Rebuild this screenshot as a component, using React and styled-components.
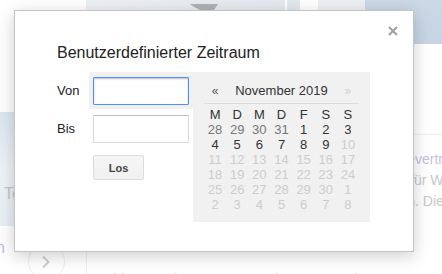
import React from "react";
import styled, { createGlobalStyle } from "styled-components";

const Global = createGlobalStyle`
  html, body { margin: 0; padding: 0; background: #fff; }
  body { font-family: "Liberation Sans", Arial, sans-serif; }
  #root { width: 442px; height: 274px; }
`;

const Page = styled.div`
  position: relative;
  width: 442px;
  height: 274px;
  overflow: hidden;
  background: #fff;
  display: flex;
  flex-direction: column;
`;

/* ---------- faded background page ---------- */
const TopStrip = styled.div`
  display: flex;
  flex: none;
  height: 44px;
`;

const Thumb = styled.div`
  flex: none;
  width: ${(p) => p.$w}px;
  height: ${(p) => p.$h || 10}px;
  margin-left: ${(p) => p.$ml || 0}px;
  background: ${(p) => p.$bg};
  overflow: hidden;
`;

const Main = styled.div`
  flex: 1;
  display: grid;
  grid-template-columns: 86px 1fr;
  min-height: 0;
`;

const LeftRail = styled.div`
  display: flex;
  flex-direction: column;
`;

const RailImage = styled.div`
  margin-top: 68px;
  width: 76px;
  height: 114px;
  box-sizing: border-box;
  background: linear-gradient(165deg, #dce6ef 0%, #eef3f7 45%, #e6eef4 100%);
  display: flex;
  align-items: flex-end;
  padding: 0 0 22px 4px;
  font-size: 16px;
  line-height: 20px;
  color: #c3c8cd;
`;

const NavRow = styled.div`
  display: flex;
  align-items: flex-start;
  margin-top: 12px;
`;

const RailLink = styled.span`
  font-size: 16px;
  line-height: 20px;
  color: #c3b8ea;
  margin-left: -4px;
`;

const NavCircle = styled.div`
  margin: 5px 0 0 23px;
  width: 37px;
  height: 37px;
  box-sizing: border-box;
  border-radius: 50%;
  border: 1px solid #efefef;
  background: #fff;
  display: flex;
  align-items: center;
  justify-content: center;
`;

const Content = styled.div`
  border-left: 1px solid #eeeeee;
  padding-left: 16px;
  display: flex;
  flex-direction: column;
  min-width: 0;
`;

const TopBlock = styled.div`
  height: 90px;
  border-bottom: 1px solid #eeeeee;
  margin-left: -16px;
`;

const Snippet = styled.div`
  margin-top: 14px;
  display: grid;
  grid-template-columns: 312px auto;
  font-size: 14px;
  line-height: 21px;
  white-space: nowrap;
`;

const SnippetLead = styled.span`
  overflow: hidden;
  text-align: right;
  color: #c6c9ce;
`;

const SnippetTail = styled.span`
  color: ${(p) => (p.$link ? "#cbc1e3" : "#c6c9ce")};
  margin-left: ${(p) => p.$shift || 0}px;
`;

const Caption = styled.div`
  margin-top: 57px;
  font-size: 15px;
  line-height: 20px;
  color: #d2d2d2;
  white-space: nowrap;
`;

/* ---------- dialog ---------- */
const Dialog = styled.div`
  position: absolute;
  left: 14px;
  top: 10px;
  width: 400px;
  height: 242px;
  box-sizing: border-box;
  background: #fff;
  border: 1px solid #c4c4c4;
  box-shadow: 0 4px 16px rgba(0, 0, 0, 0.2);
  padding: 32px 0 0 42px;
  color: #222;
  font-family: "Liberation Sans", Arial, sans-serif;
`;

const CloseButton = styled.button`
  position: absolute;
  top: 15px;
  right: 15px;
  width: 10px;
  height: 10px;
  padding: 0;
  border: 0;
  background: none;
  display: block;
  cursor: pointer;
  svg { display: block; }
`;

const Title = styled.h2`
  margin: 0;
  font-size: 16px;
  line-height: 20px;
  font-weight: normal;
  color: #222;
`;

const FormArea = styled.div`
  display: flex;
  align-items: flex-start;
  margin-top: 9px;
`;

const FieldColumn = styled.div`
  width: 136px;
  display: flex;
  flex-direction: column;
  gap: 1px;
`;

const FieldRow = styled.div`
  display: flex;
  align-items: center;
`;

const FieldLabel = styled.label`
  width: 32px;
  font-size: 13px;
  color: #222;
`;

const FieldCell = styled.div`
  padding: 5px 4px 4px;
  background: ${(p) => (p.$active ? "#f1f1f1" : "transparent")};
`;

const Field = styled.input`
  display: block;
  width: 96px;
  height: 28px;
  box-sizing: border-box;
  margin: 0;
  padding: 0 6px;
  font: 13px "Liberation Sans", Arial, sans-serif;
  border: 1px solid ${(p) => (p.$active ? "#4d90fe" : "#d9d9d9")};
  border-top-color: ${(p) => (p.$active ? "#4d90fe" : "#c0c0c0")};
  box-shadow: ${(p) => (p.$active ? "inset 0 1px 2px rgba(0,0,0,0.25)" : "none")};
  border-radius: 1px;
  outline: none;
  background: #fff;
`;

const GoButton = styled.button`
  margin: 7px 0 0 36px;
  width: 51px;
  height: 25px;
  box-sizing: border-box;
  padding: 0;
  font: bold 11px "Liberation Sans", Arial, sans-serif;
  color: #444;
  background: linear-gradient(#f5f5f5, #f1f1f1);
  border: 1px solid #dcdcdc;
  border-radius: 2px;
`;

const Calendar = styled.div`
  width: 177px;
  height: 150px;
  box-sizing: border-box;
  background: #f1f1f1;
  padding: 6px 11px 10px;
`;

const CalHeader = styled.div`
  display: grid;
  grid-template-columns: repeat(7, 1fr);
  align-items: center;
  height: 25px;
  border-bottom: 1px solid #dddddd;
`;

const NavArrow = styled.span`
  text-align: center;
  font-size: 12px;
  color: ${(p) => (p.$disabled ? "#cfcfcf" : "#555")};
`;

const MonthTitle = styled.span`
  grid-column: 2 / span 5;
  text-align: center;
  font-size: 13px;
  color: #333;
`;

const DayGrid = styled.div`
  display: grid;
  grid-template-columns: repeat(7, 1fr);
  margin-top: 3px;
  font-size: 13px;
  line-height: 15px;
  text-align: center;
`;

const dayColors = {
  head: "#333",
  prev: "#777",
  cur: "#333",
  off: "#cdcdcd",
};

const DayCell = styled.span`
  color: ${(p) => dayColors[p.$kind]};
`;

const weekdays = ["M", "D", "M", "D", "F", "S", "S"];

const days = [
  ...[28, 29, 30, 31].map((d) => ({ d, k: "prev" })),
  ...Array.from({ length: 9 }, (_, i) => ({ d: i + 1, k: "cur" })),
  ...Array.from({ length: 21 }, (_, i) => ({ d: i + 10, k: "off" })),
  ...Array.from({ length: 8 }, (_, i) => ({ d: i + 1, k: "off" })),
];

export default function App() {
  return (
    <>
      <Global />
      <Page>
        <TopStrip>
          <Thumb $w={86} $bg="#fff" />
          <Thumb $w={199} $bg="linear-gradient(90deg,#edf1f5,#e4e9ef)">
            <svg width="199" height="10" viewBox="0 0 199 10">
              <path d="M104 0 L132 0 L126 9 C118 8 112 6 104 0 Z" fill="#aeb2b7" />
            </svg>
          </Thumb>
          <Thumb $w={13} $ml={2} $bg="#e3e8ee" />
          <Thumb $w={47} $ml={18} $bg="#eef1f4" />
          <Thumb $w={77} $h={44} $bg="linear-gradient(180deg,#cbd8e6,#c7d5e4)" />
        </TopStrip>
        <Main>
          <LeftRail>
            <RailImage>Top</RailImage>
            <NavRow>
              <RailLink>n</RailLink>
              <NavCircle>
                <svg width="10" height="14" viewBox="0 0 10 14">
                  <path d="M2 1.5 L7.5 7 L2 12.5" fill="none" stroke="#cfcfcf" strokeWidth="2" />
                </svg>
              </NavCircle>
            </NavRow>
          </LeftRail>
          <Content>
            <TopBlock />
            <Snippet>
              <SnippetLead>Seit über 30 Jahren ein Partner, dem Sie</SnippetLead>
              <SnippetTail $link>vertrauen</SnippetTail>
              <SnippetLead>Kompetente Beratung und faire Preise f</SnippetLead>
              <SnippetTail $shift={-1}>ür Wohnen</SnippetTail>
              <SnippetLead>Wir freuen uns auf Ihren Besuch</SnippetLead>
              <SnippetTail>. Die</SnippetTail>
            </Snippet>
            <Caption>Abb. Messing: 1.10.1999 / 1.10.2000 (10. März 1999 / 1.</Caption>
          </Content>
        </Main>

        <Dialog role="dialog">
          <CloseButton aria-label="Schließen">
            <svg width="10" height="10" viewBox="0 0 10 10">
              <path d="M1 1 L9 9 M9 1 L1 9" stroke="#a0a0a0" strokeWidth="2" />
            </svg>
          </CloseButton>
          <Title>Benutzerdefinierter Zeitraum</Title>
          <FormArea>
            <FieldColumn>
              <FieldRow>
                <FieldLabel>Von</FieldLabel>
                <FieldCell $active>
                  <Field $active />
                </FieldCell>
              </FieldRow>
              <FieldRow>
                <FieldLabel>Bis</FieldLabel>
                <FieldCell>
                  <Field />
                </FieldCell>
              </FieldRow>
              <div>
                <GoButton>Los</GoButton>
              </div>
            </FieldColumn>
            <Calendar>
              <CalHeader>
                <NavArrow>«</NavArrow>
                <MonthTitle>November 2019</MonthTitle>
                <NavArrow $disabled>»</NavArrow>
              </CalHeader>
              <DayGrid>
                {weekdays.map((w, i) => (
                  <DayCell key={"w" + i} $kind="head">{w}</DayCell>
                ))}
                {days.map((x, i) => (
                  <DayCell key={i} $kind={x.k}>{x.d}</DayCell>
                ))}
              </DayGrid>
            </Calendar>
          </FormArea>
        </Dialog>
      </Page>
    </>
  );
}
